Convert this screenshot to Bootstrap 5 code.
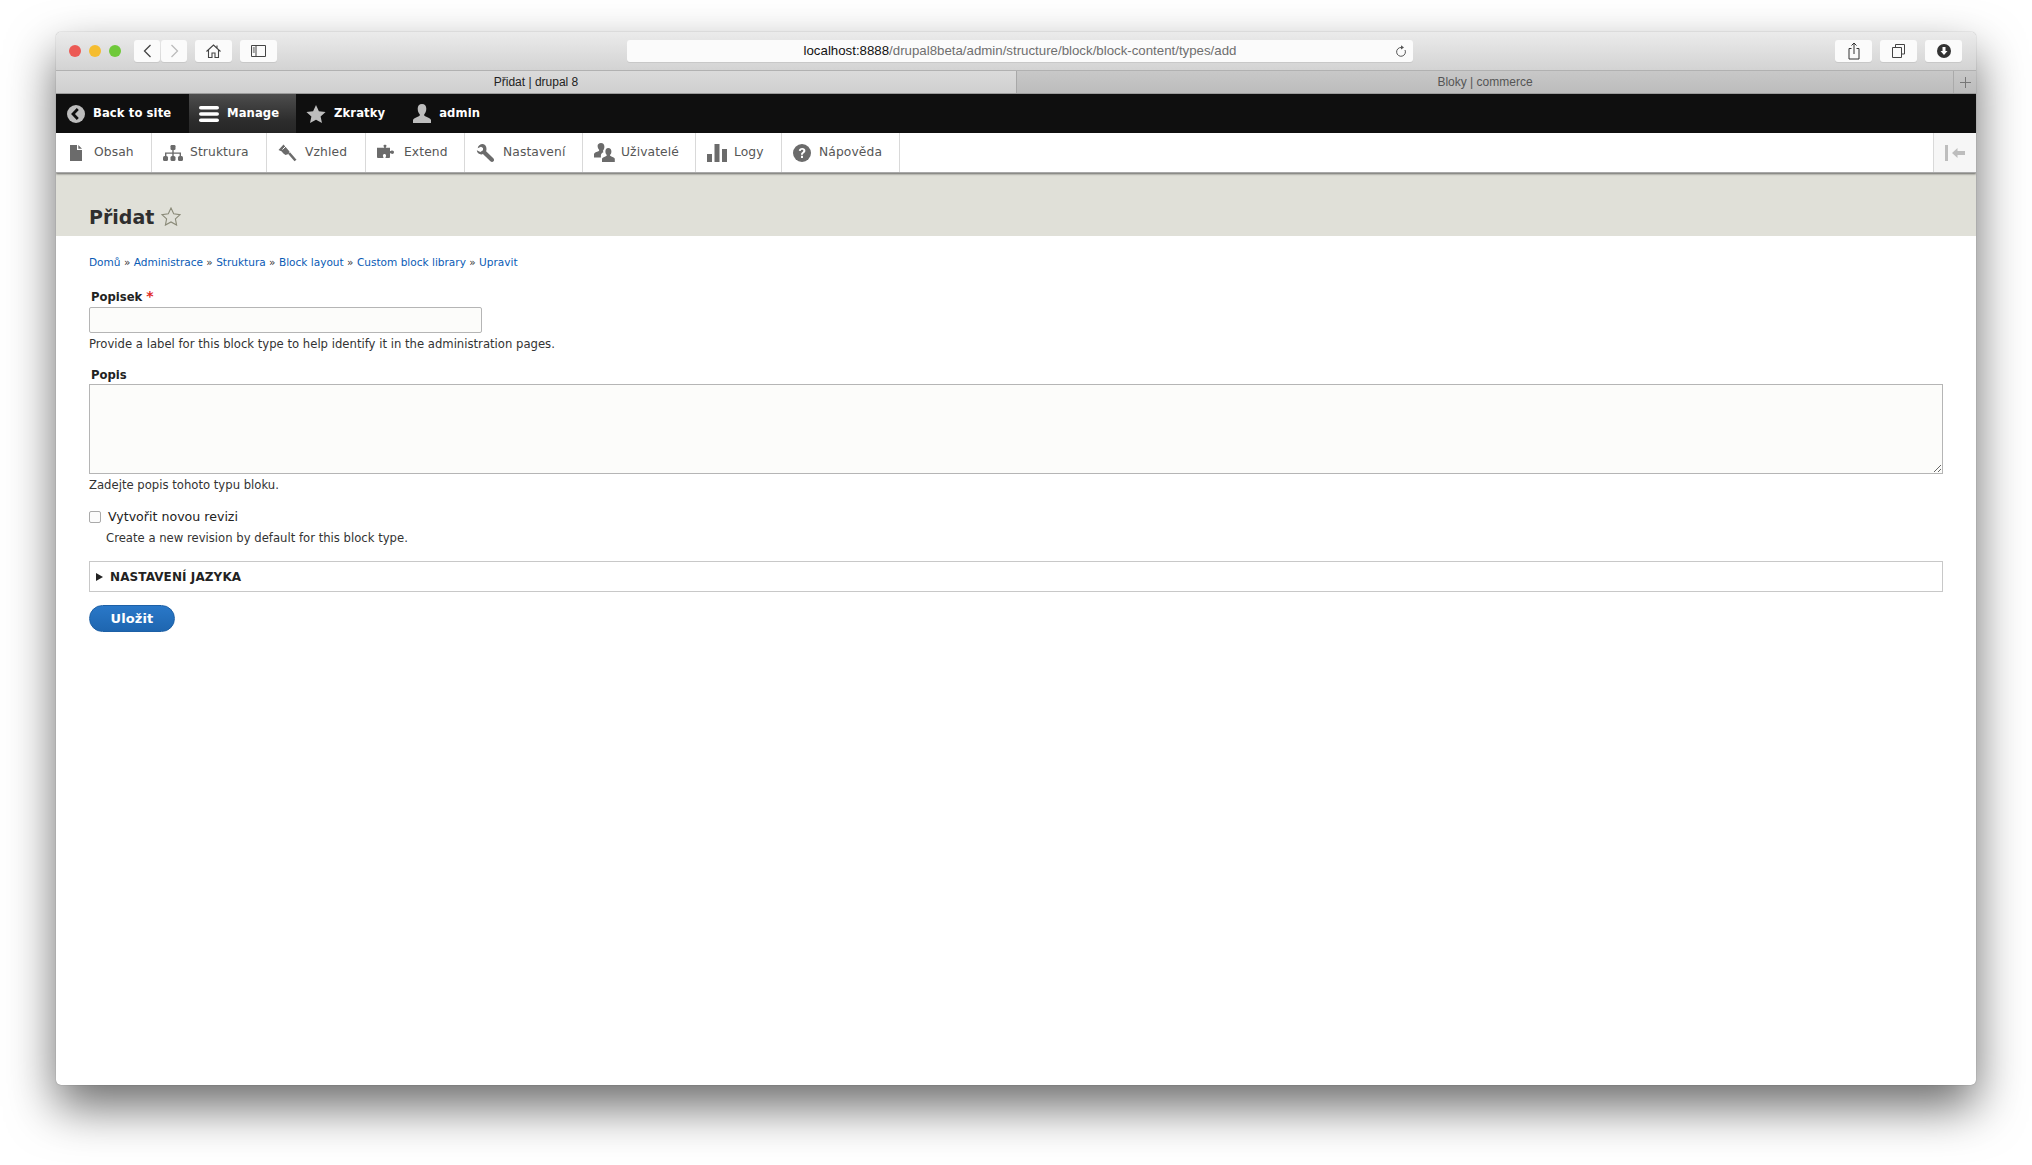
<!doctype html>
<html lang="cs">
<head>
<meta charset="utf-8">
<title>Přidat | drupal 8</title>
<link rel="stylesheet" href="https://cdn.jsdelivr.net/npm/bootstrap@5.3.0/dist/css/bootstrap.min.css">
<style>
html,body{height:100%;background:#fff;overflow:hidden}
body{font-family:"DejaVu Sans",sans-serif;color:#222}
.mac-window{margin:32px 56px 0 56px;height:1053px;border-radius:5px;background:#fff;box-shadow:0 22px 48px rgba(0,0,0,.58),0 0 1px rgba(0,0,0,.5);overflow:hidden;display:flex;flex-direction:column}
.title-bar{height:39px;background:linear-gradient(#ebebeb,#d3d3d3);border-bottom:1px solid #b1b1b1;padding:0 14px 0 13px;flex:none}
.light{width:12px;height:12px;border-radius:50%;display:block}
.light-r{background:#ec5a55}.light-y{background:#f5bd30}.light-g{background:#6fc93a}
.lights{margin-right:13px}
.tool{height:22px;background:#fbfbfb;border-radius:3px;display:flex;align-items:center;justify-content:center;box-shadow:0 1px 0 #c8c8c8}
.w-nav{width:26px}.w-home{width:37px}.w-side{width:37px}.w-act{width:37px}
.addr{width:786px;height:22px;margin-left:350px;background:#fbfbfb;border-radius:3px;box-shadow:0 1px 0 #c8c8c8;font:13.28px "Liberation Sans",sans-serif;color:#6f6f6f;position:relative;text-align:center;line-height:22px}
.addr b{font-weight:400;color:#111}
.addr svg{position:absolute;right:6px;top:5px}
.tab-bar{height:23px;flex:none;font:12px/22px "Liberation Sans",sans-serif;border-bottom:1px solid #9c9c9c}
.tab-on{width:961px;text-align:center;background:linear-gradient(#dadada,#cfcfcf);color:#222;border-right:1px solid #a8a8a8}
.tab-off{flex:1;text-align:center;background:linear-gradient(#c8c8c8,#bcbcbc);color:#555}
.tab-new{width:23px;text-align:center;background:linear-gradient(#c8c8c8,#bcbcbc);border-left:1px solid #aaa;display:flex;align-items:center;justify-content:center}
.black-bar{height:39px;background:#0f0f0f;flex:none}
.black-item{display:flex;align-items:center;padding:0 12px 0 12px;font-size:11.6px;font-weight:700;color:#fff;height:100%;text-decoration:none;letter-spacing:.1px}
.black-item svg{margin-right:8px;flex:none}
.black-active{background:linear-gradient(#4d4d4d,#2c2c2c 70%,#262626);width:107px;padding:0 0 0 10px}
.white-bar{height:40px;background:#fff;flex:none;box-shadow:0 1px 2px rgba(0,0,0,.55);border-bottom:1px solid #a8a8a8;position:relative;z-index:2}
.tray-item{display:flex;align-items:center;height:100%;padding:0 0 0 11px;color:#565656;font-size:12.3px;text-decoration:none;border-right:1px solid #d9d9d9;letter-spacing:.1px}
.tray-item svg{margin-right:9px;flex:none}
.tray-first{padding-left:14px}
.tray-toggle{width:43px;background:#f6f6f6;border-left:1px solid #d9d9d9;display:flex;align-items:center;justify-content:center}
.page-head{height:63px;background:#e0e0d8;flex:none;padding:32px 33px 0}
.page-title{font-size:19px;font-weight:700;color:#2f2f2f;line-height:24px;margin:0}
.page-star{margin:2px 0 0 7px}
.page-body{padding:0 33px;flex:1;font-size:11px;color:#333}
.crumbs{margin:0;padding:19px 0 0;line-height:14px;font-size:10.55px;height:34px}
.crumbs a{color:#0a5bb5;text-decoration:none}
.field-label{display:block;font-weight:700;font-size:11.6px;color:#222;line-height:15px;margin:0 0 2px 2px}
.field-b .field-label{margin-bottom:1px}
.req{color:#e0291f;font-size:14px;line-height:10px}
.field-a{padding-top:20px}
.field-input{display:block;width:393px;height:26px;border:1px solid #b5b5b5;border-radius:2px;background:#fcfcfa;padding:0}
.hint{font-size:11.65px;line-height:14px;margin:4px 0 0;color:#333}
.field-b{margin-top:17px}
.field-area{display:block;width:100%;height:90px;border:1px solid #b5b5b5;border-radius:0;background:#fcfcfa;padding:0;resize:vertical}
.check-row{margin-top:18px;height:14px}
.form-check-input.box{width:12px;height:12px;margin:0;border:1px solid #aaa;border-radius:2px;background-color:#fcfcfc;flex:none}
.check-label{font-size:12.6px;margin-left:7px;color:#222;line-height:14px}
.hint-in{margin:7px 0 0 17px}
.lang-box{margin-top:16px;height:31px;border:1px solid #c8c8c8;display:flex;align-items:center;padding-left:6px;font-size:12px;font-weight:700;color:#222;letter-spacing:.1px}
.lang-arrow{width:0;height:0;border-left:7px solid #222;border-top:4px solid transparent;border-bottom:4px solid transparent;margin-right:7px}
.save-btn{margin-top:13px;width:86px;height:27px;padding:0;border-radius:14px;border:1px solid #1d60a6;background:linear-gradient(#2a78c8,#1e66b0);color:#fff;font-size:13px;font-weight:700;line-height:24px;letter-spacing:.1px}
.w-96{width:96px}.w-115{width:115px}.w-99{width:99px}.w-118{width:118px}.w-113{width:113px}.w-86{width:86px}
</style>
</head>
<body>
<div class="mac-window">
  <div class="title-bar d-flex align-items-center">
    <div class="d-flex gap-2 lights align-items-center">
      <span class="light light-r"></span><span class="light light-y"></span><span class="light light-g"></span>
    </div>
    <div class="d-flex align-items-center" style="gap:1px">
      <span class="tool w-nav"><svg width="9" height="14" viewBox="0 0 9 14"><path d="M7.500 1 1.500 7l6 6" fill="none" stroke="#444" stroke-width="1.300"/></svg></span>
      <span class="tool w-nav"><svg width="9" height="14" viewBox="0 0 9 14"><path d="M1.500 1l6 6-6 6" fill="none" stroke="#bbb" stroke-width="1.300"/></svg></span>
    </div>
    <span class="tool w-home ms-2"><svg width="15" height="14" viewBox="0 0 15 14"><path d="M.5 7.500 7.500 1l7 6.500M2.500 6v7.500h3.500V9h3v4.500h3.500V6M11 1.500v2.500" fill="none" stroke="#444" stroke-width="1.100"/></svg></span>
    <span class="tool w-side ms-2"><svg width="15" height="12" viewBox="0 0 15 12"><path d="M.5.500h14v11H.5zM5 .5v11M1.800 3h2M1.800 5h2M1.800 7h2" fill="none" stroke="#444"/></svg></span>
    <div class="addr"><b>localhost:8888</b>/drupal8beta/admin/structure/block/block-content/types/add
      <svg width="12" height="13" viewBox="0 0 12 13"><path d="M6.500 2.500A4.400 4.400 0 1 0 10 5" fill="none" stroke="#555"/><path d="M6 .2 9 2.500 6 4.600z" fill="#555"/></svg></div>
    <div class="d-flex align-items-center ms-auto" style="gap:8px">
      <span class="tool w-act"><svg width="12" height="18" viewBox="0 0 12 18"><path d="M3.500 6.500H1v10.500h10V6.500H8.500M6 12V1M3.500 3.500 6 1l2.500 2.500" fill="none" stroke="#333"/></svg></span>
      <span class="tool w-act"><svg width="13" height="14" viewBox="0 0 13 14"><path d="M3.500 3.500V.5h9V10h-3M.5 3.500h9v10h-9z" fill="none" stroke="#444"/></svg></span>
      <span class="tool w-act"><svg width="14" height="14" viewBox="0 0 14 14"><circle cx="7" cy="7" r="7" fill="#333"/><path d="M5.500 3h3v4h2L7 11 3.500 7h2z" fill="#fff"/></svg></span>
    </div>
  </div>
  <div class="tab-bar d-flex">
    <div class="tab-on">Přidat | drupal 8</div>
    <div class="tab-off">Bloky | commerce</div>
    <div class="tab-new"><svg width="11" height="11" viewBox="0 0 11 11"><path d="M5.500 0v11M0 5.500h11" stroke="#777"/></svg></div>
  </div>
  <nav class="black-bar d-flex">
    <a class="black-item" href="#" style="width:133px;padding-left:11px"><svg width="18" height="18" viewBox="0 0 18 18"><circle cx="9" cy="9" r="9" fill="#bdbdbd"/><path d="M10.800 4 6 9l4.800 5" fill="none" stroke="#0f0f0f" stroke-width="2.800"/></svg>Back to site</a>
    <a class="black-item black-active" href="#"><svg width="20" height="18" viewBox="0 0 20 18"><g fill="#fff"><rect y="1" width="20" height="3.600" rx="1.800"/><rect y="7.200" width="20" height="3.600" rx="1.800"/><rect y="13.400" width="20" height="3.600" rx="1.800"/></g></svg>Manage</a>
    <a class="black-item" href="#" style="padding-left:10px"><svg width="20" height="18" viewBox="0 0 20 18"><path d="M10 0l2.900 6.200 6.700.8-5 4.600 1.400 6.400L10 14.800 4 18l1.400-6.400-5-4.600 6.700-.8z" fill="#bdbdbd"/></svg>Zkratky</a>
    <a class="black-item" href="#" style="padding-left:16px"><svg width="18" height="20" viewBox="0 0 18 20"><path d="M9 0c2.800 0 4.300 2 4.300 4.800 0 2.300-.9 4.300-2 5.400-.5 1 .2 1.900 2 2.600 2.300.9 4.300 1.700 4.700 3.200V19H0v-3c.4-1.500 2.400-2.300 4.700-3.200 1.800-.7 2.500-1.600 2-2.600-1.100-1.100-2-3.100-2-5.400C4.700 2 6.200 0 9 0z" fill="#bdbdbd"/></svg>admin</a>
  </nav>
  <nav class="white-bar d-flex">
    <a class="tray-item tray-first w-96" href="#"><svg width="13" height="16" viewBox="0 0 13 16"><path d="M0 0h7v5h5v11H0zM8.300 0 12 3.800H8.300z" fill="#6b6b6b"/></svg><span style="margin-left:2px">Obsah</span></a>
    <a class="tray-item w-115" href="#"><svg width="20" height="16" viewBox="0 0 20 16" style="margin-right:7px"><g fill="#6b6b6b"><rect x="7.500" y="0" width="5" height="5" rx="1.200"/><rect x="0" y="11" width="5" height="5" rx="1.500"/><rect x="7.500" y="11" width="5" height="5" rx="1.500"/><rect x="15" y="11" width="5" height="5" rx="1.500"/><path d="M9.300 5h1.400v2.400H18V11h-1.400V8.800h-5.900V11H9.300V8.800H3.400V11H2V7.400h7.300z"/></g></svg>Struktura</a>
    <a class="tray-item w-99" href="#"><svg width="20" height="18" viewBox="0 0 20 18" style="margin-right:7px"><path d="M5.500.5.500 6l3.300 1.500 1.300 1.800L7.500 11l3-1 1-2.500z" fill="#6b6b6b"/><path d="M11 9l6.500 7.500" stroke="#6b6b6b" stroke-width="2.600"/><path d="M4.500 5.500 8 2" stroke="#fff" stroke-width="1"/></svg>Vzhled</a>
    <a class="tray-item w-99" href="#"><svg width="20" height="17" viewBox="0 0 20 17" style="margin-right:7px"><path d="M6.500 1.500C6.500.5 9.500.5 9.500 1.500c0 1-.7 1.300-.7 2.200H13v3.500c1 0 1.300-.7 2.200-.7 2.400 0 2.400 3.500 0 3.500-.9 0-1.200-.7-2.200-.7v3.700c0 .5-.5 1-1 1H8.500c0-1 .6-1.300.6-2.200 0-2.300-3.200-2.300-3.200 0 0 .9.600 1.200.6 2.200H1c-.5 0-1-.5-1-1V3.700h7.200c0-.9-.7-1.200-.7-2.200z" fill="#6b6b6b"/></svg>Extend</a>
    <a class="tray-item w-118" href="#"><svg width="19" height="18" viewBox="0 0 19 18" style="margin-right:8px"><path d="M6.800 0C4 0 2 1.700 1.700 4.300L5 2.800l2 1.200v2.300L4.300 8 .8 6.300c.2 2.700 2.300 4.300 4.800 4.100l1.300-.3 7.500 7.200c1 .9 2.300.9 3.100 0 .8-.9.700-2.100-.2-3l-7.200-7.100c.3-.7.400-1.400.4-2.100C10.500 2 9 .3 6.800 0z" fill="#6b6b6b"/></svg>Nastavení</a>
    <a class="tray-item w-113" href="#"><svg width="21" height="19" viewBox="0 0 21 19" style="margin-right:6px"><g fill="#6b6b6b"><path d="M7 0c2.200 0 3.400 1.600 3.400 3.800 0 1.500-.5 2.900-1.300 3.700-.3.700-.1 1.200.6 1.600-1.400.7-2.500 1.600-2.800 3.200v2.200H0v-3.400c.3-1.200 1.800-1.800 3.700-2.500 1.200-.5 1.800-1.100 1.400-1.900-.9-.8-1.500-2.300-1.500-3.900C3.600 1.600 4.800 0 7 0z"/><path d="M14.300 5c2 0 3.100 1.500 3.100 3.400 0 1.400-.5 2.700-1.300 3.400-.3.700.2 1.200 1.300 1.700 1.700.6 3 1.100 3.400 2.200V19H8v-3.300c.4-1.100 1.700-1.600 3.400-2.200 1.100-.5 1.600-1 1.300-1.700-.8-.7-1.300-2-1.300-3.400C11.400 6.500 12.300 5 14.300 5z"/></g></svg>Uživatelé</a>
    <a class="tray-item w-86" href="#"><svg width="20" height="18" viewBox="0 0 20 18" style="margin-right:7px"><g fill="#6b6b6b"><rect x="0" y="10" width="5" height="8"/><rect x="7.500" y="0" width="5" height="18"/><rect x="15" y="5" width="5" height="13"/></g></svg>Logy</a>
    <a class="tray-item w-118" href="#"><svg width="18" height="18" viewBox="0 0 18 18" style="margin-right:8px"><circle cx="9" cy="9" r="9" fill="#6b6b6b"/><path d="M5.800 6.800C6 4.800 7.400 4 9.200 4c1.900 0 3.200 1 3.200 2.700 0 1.300-.8 1.900-1.600 2.500-.7.500-.9.800-.9 1.600H8c0-1.300.3-1.900 1.200-2.600.7-.6 1.100-.9 1.100-1.400 0-.6-.5-1-1.200-1-.8 0-1.300.4-1.300 1.200z M8 11.700h2V14H8z" fill="#fff"/></svg>Nápověda</a>
    <div class="tray-toggle ms-auto"><svg width="21" height="16" viewBox="0 0 21 16"><rect x="0" y="0" width="3" height="16" fill="#bdbdbd"/><path d="M7 8l5.500-5v3H20v4h-7.500v3z" fill="#bdbdbd"/></svg></div>
  </nav>
  <header class="page-head d-flex align-items-start">
    <h1 class="page-title">Přidat</h1>
    <svg class="page-star" width="20" height="19" viewBox="0 0 20 19"><path d="M10 1l2.700 5.800 6.300.8-4.600 4.300 1.200 6.200L10 15l-5.600 3.100 1.200-6.200L1 7.600l6.300-.8z" fill="none" stroke="#8a8a78" stroke-width="1.100"/></svg>
  </header>
  <main class="page-body">
    <p class="crumbs"><a href="#">Domů</a> » <a href="#">Administrace</a> » <a href="#">Struktura</a> » <a href="#">Block layout</a> » <a href="#">Custom block library</a> » <a href="#">Upravit</a></p>
    <form>
      <div class="field-a">
        <label class="field-label" for="f1">Popisek <span class="req">*</span></label>
        <input id="f1" class="field-input" type="text">
        <p class="hint">Provide a label for this block type to help identify it in the administration pages.</p>
      </div>
      <div class="field-b">
        <label class="field-label" for="f2">Popis</label>
        <textarea id="f2" class="field-area"></textarea>
        <p class="hint">Zadejte popis tohoto typu bloku.</p>
      </div>
      <div class="check-row d-flex align-items-center">
        <input id="f3" class="form-check-input box" type="checkbox">
        <label class="check-label" for="f3">Vytvořit novou revizi</label>
      </div>
      <p class="hint hint-in">Create a new revision by default for this block type.</p>
      <div class="lang-box"><span class="lang-arrow"></span>NASTAVENÍ JAZYKA</div>
      <button type="button" class="btn save-btn d-block">Uložit</button>
    </form>
  </main>
</div>
<script src="https://cdn.jsdelivr.net/npm/bootstrap@5.3.0/dist/js/bootstrap.bundle.min.js"></script>
</body>
</html>
